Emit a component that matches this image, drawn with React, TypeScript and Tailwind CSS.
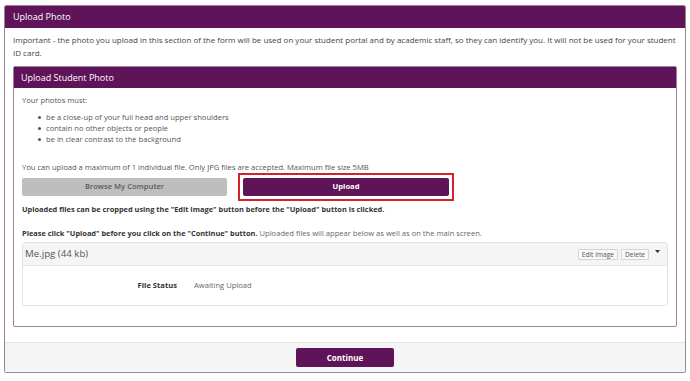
import React from "react";

const P = "bg-[#5f1459]";

function Bullet({ children }: { children: React.ReactNode }) {
  return (
    <div className="flex items-center h-[11px]">
      <span className="w-[3px] h-[3px] rounded-full bg-[#555] ml-[16px] mr-[5px]" />
      <span>{children}</span>
    </div>
  );
}

export default function App() {
  return (
    <div
      className="w-[690px] h-[381px] bg-white pt-[5px] pl-[4px]"
      style={{ fontFamily: '"Open Sans", "Liberation Sans", sans-serif' }}
    >
      <div className="w-[682px] h-[368px] border border-[#9b8498] rounded-[2px] flex flex-col overflow-hidden">
        <div className={`${P} h-[22px] flex items-center px-[8px] text-white text-[9px]`}>
          Upload Photo
        </div>
        <div className="px-[8px] pt-[5px] flex-1 flex flex-col">
          <p className="text-[8px] leading-[13px] text-[#444]">
            Important - the photo you upload in this section of the form will be used on your student portal and by academic staff, so they can identify you. It will not be used for your student ID card.
          </p>
          <div className="mt-[7px] border border-[#9b8498] rounded-[2px]">
            <div className={`${P} h-[21px] flex items-center px-[7px] text-white text-[9px]`}>
              Upload Student Photo
            </div>
            <div className="px-[8px] pt-[6px] pb-[20px] text-[7.6px] text-[#555]">
              <p className="leading-[12px]">Your photos must:</p>
              <div className="mt-[6px] leading-[11px]">
                <Bullet>be a close-up of your full head and upper shoulders</Bullet>
                <Bullet>contain no other objects or people</Bullet>
                <Bullet>be in clear contrast to the background</Bullet>
              </div>
              <p className="mt-[16px] leading-[12px]">
                You can upload a maximum of 1 individual file. Only JPG files are accepted. Maximum file size 5MB
              </p>
              <div className="mt-[5px] flex gap-[16px]">
                <div className="w-[205px] h-[18px] bg-[#bebebe] rounded-[2px] flex items-center justify-center text-[#5a5a5a] font-semibold">
                  Browse My Computer
                </div>
                <div className="relative">
                  <div className={`${P} w-[206px] h-[18px] rounded-[2px] flex items-center justify-center text-white font-bold`}>
                    Upload
                  </div>
                  <div className="absolute -left-[5px] -right-[5px] -top-[5px] -bottom-[5px] border-2 border-[#d3222a]" />
                </div>
              </div>
              <p className="mt-[7px] leading-[12px] font-bold text-[7.4px] text-[#333]">
                Uploaded files can be cropped using the "Edit Image" button before the "Upload" button is clicked.
              </p>
              <p className="mt-[12px] leading-[12px] text-[#666]">
                <span className="font-bold text-[7.4px] text-[#333]">Please click "Upload" before you click on the "Continue" button.</span>{" "}
                Uploaded files will appear below as well as on the main screen.
              </p>
              <div className="mt-[3px] border border-[#e2e2e2] rounded-[3px]">
                <div className="h-[23px] bg-[#f5f5f5] border-b border-[#e6e6e6] flex items-center pl-[2px] pr-[7px]">
                  <span className="text-[9.7px] text-[#555]">Me.jpg (44 kb)</span>
                  <div className="ml-auto flex items-center gap-[3px]">
                    <span className="h-[11px] px-[3px] border border-[#d4d4d4] bg-[#f9f9f9] rounded-[1px] text-[6.6px] leading-[9px] text-[#555] flex items-center">Edit Image</span>
                    <span className="h-[11px] px-[3px] border border-[#d4d4d4] bg-[#f9f9f9] rounded-[1px] text-[6.6px] leading-[9px] text-[#555] flex items-center">Delete</span>
                    <svg width="5" height="4" viewBox="0 0 5 4" className="ml-[3px] -mt-[4px]">
                      <path d="M0 0 L5 0 L2.5 3 Z" fill="#333" />
                    </svg>
                  </div>
                </div>
                <div className="h-[39px] flex items-center">
                  <span className="w-[154px] text-right font-bold text-[#333]">File Status</span>
                  <span className="ml-[17px] text-[#666]">Awaiting Upload</span>
                </div>
              </div>
            </div>
          </div>
        </div>
        <div className="h-[30px] bg-[#f5f5f5] border-t border-[#e4e4e4] flex items-center justify-center">
          <div className={`${P} w-[98px] h-[19px] rounded-[2px] flex items-center justify-center text-white text-[8px] font-bold`}>
            Continue
          </div>
        </div>
      </div>
    </div>
  );
}
